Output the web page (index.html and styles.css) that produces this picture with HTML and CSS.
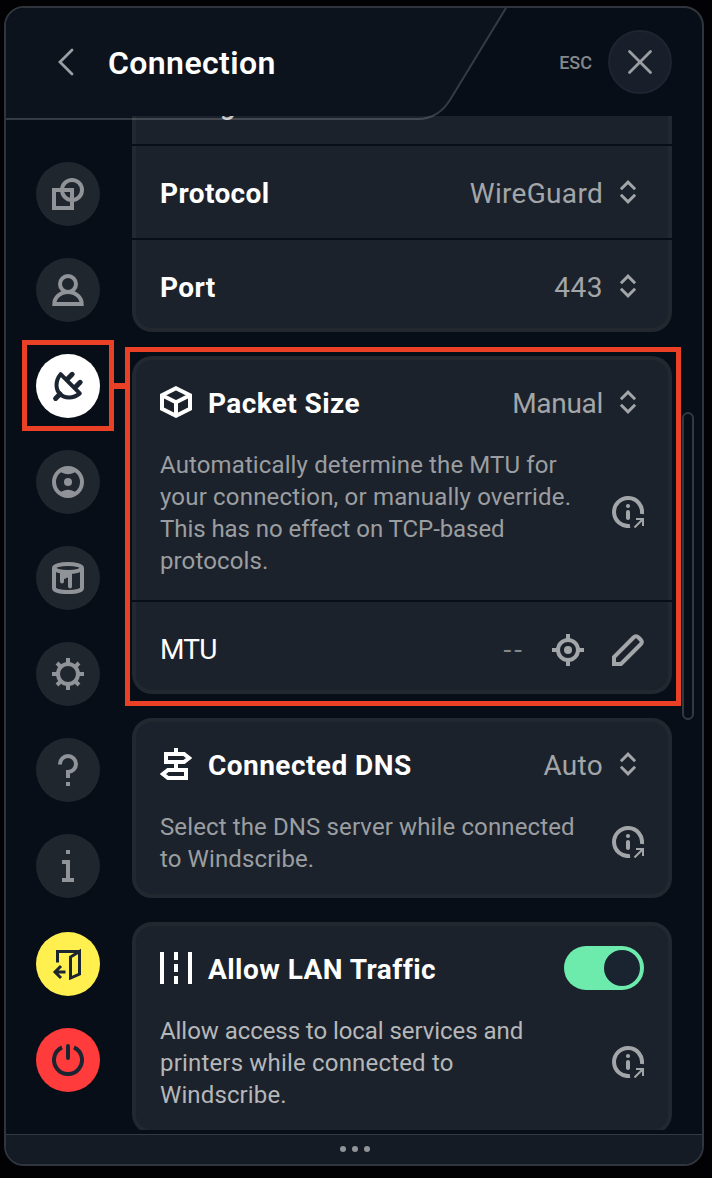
FILE: index.html
```html
<!DOCTYPE html>
<html lang="en">
<head>
    <meta charset="UTF-8">
    <meta name="viewport" content="width=device-width, initial-scale=1.0">
    <title>Connection</title>
    <link rel="stylesheet" href="styles.css">
</head>
<body>
    <!-- shared symbols -->
    <svg class="symbols" width="0" height="0">
        <symbol id="updown" viewBox="0 0 32 32">
            <path d="M8.9 13.2 16 6.1l7.1 7.1M8.9 18.8l7.1 7.1 7.1-7.1" fill="none" stroke="currentColor" stroke-width="2.9"/>
        </symbol>
        <symbol id="info" viewBox="0 0 32 32">
            <path d="M29.9 18A14 14 0 1 0 18 29.9" fill="none" stroke="currentColor" stroke-width="4"/>
            <circle cx="16" cy="10" r="2.1" fill="currentColor"/>
            <path d="M16 16v6" fill="none" stroke="currentColor" stroke-width="4" stroke-linecap="round"/>
            <path d="M22.5 31.5 31 23M24 23h7v7" fill="none" stroke="currentColor" stroke-width="2"/>
        </symbol>
    </svg>

    <div class="window">
        <header class="header">
            <svg class="header-shape" width="504" height="114" viewBox="0 0 504 114">
                <path class="header-fill" d="M0 0H500L444 92Q440 99 432 105L428 108H126V111H0Z"/>
                <path class="header-line" d="M500 0 444 92Q432 111 412 111H0"/>
            </svg>
            <svg class="back" width="32" height="32" viewBox="0 0 32 32"><path d="M22 4 10 16l12 12"/></svg>
            <h1>Connection</h1>
            <span class="esc">ESC</span>
            <button class="close">
                <svg width="32" height="32" viewBox="0 0 32 32"><path d="M5.5 5.5l21 21M26.5 5.5l-21 21"/></svg>
            </button>
        </header>

        <div class="main">
            <nav class="sidebar">
                <a class="tab"><svg viewBox="0 0 32 32"><path d="M2 12h18v18H2z"/><circle cx="20" cy="12" r="10"/></svg></a>
                <a class="tab"><svg viewBox="0 0 32 32"><circle cx="16" cy="10" r="8"/><path d="M2.3 30a13.7 12 0 0 1 27.4 0z"/></svg></a>
                <a class="tab active"><svg viewBox="0 0 32 32"><path d="M8.6 4.2 27.8 23.4C21 29 12.5 28.6 8 24S3 11 8.6 4.2z" stroke-linejoin="round"/><path class="prong" d="M16 8.5l4.2-4.2M24 16.5l4.2-4.2M3.6 28.4 8 24"/></svg></a>
                <a class="tab"><svg viewBox="0 0 32 32"><circle cx="16" cy="16" r="14"/><path class="solid" d="M7 4Q16 .5 25 4L22.5 6.5Q16 10 9.5 6.5zM7 28Q16 31.5 25 28L22.5 25.5Q16 22 9.5 25.5z"/><circle class="solid" cx="16" cy="16" r="4"/></svg></a>
                <a class="tab"><svg viewBox="0 0 32 32"><path d="M2 6v20c0 2.2 6 4 14 4s14-1.8 14-4V6"/><ellipse cx="16" cy="6" rx="14" ry="4"/><path class="solid" d="M8 9h12v15.5a2 2 0 0 1-4 0V16a1.5 1.5 0 0 0-2 0v.5a1.5 1.5 0 0 1-2 0V19.5a2 2 0 0 1-4 0z"/></svg></a>
                <a class="tab"><svg viewBox="0 0 32 32"><circle cx="16" cy="16" r="10"/><path d="M16 0v6M16 26v6M0 16h6M26 16h6M5 5l4.5 4.5M22.5 22.5 27 27M27 5l-4.5 4.5M5 27l4.5-4.5"/></svg></a>
                <a class="tab"><svg viewBox="0 0 32 32"><path d="M8 10.5V10a8 8 0 1 1 8 8v6M16 28v4"/></svg></a>
                <a class="tab"><svg viewBox="0 0 32 32"><path d="M16 0v4M10 12h6v18M10 30h12"/></svg></a>
                <a class="tab exit"><svg viewBox="0 0 32 32"><path d="M5.5 14.5V3.5h22M27.5 3.5V26l-9 4V9z"/><path d="M13.5 24H3M9 18l-6 6 6 6"/></svg></a>
                <a class="tab power"><svg viewBox="0 0 32 32"><path d="M22 3.35A14 14 0 1 1 10 3.35"/><path d="M16 2v12" stroke-linecap="round"/></svg></a>
            </nav>

            <div class="content">
                <div class="card">
                    <div class="row mode"><span class="name">Config</span></div>
                    <div class="row">
                        <span class="name">Protocol</span>
                        <span class="value">WireGuard</span>
                        <svg class="icon"><use href="#updown"/></svg>
                    </div>
                    <div class="row">
                        <span class="name">Port</span>
                        <span class="value port">443</span>
                        <svg class="icon"><use href="#updown"/></svg>
                    </div>
                </div>

                <div class="card">
                    <div class="section">
                        <div class="line">
                            <svg class="title-icon" viewBox="0 0 32 32"><path d="M16 2.2 30 9.2v13.6l-14 7-14-7V9.2zM2 9.2l14 7 14-7M16 16.2V30"/></svg>
                            <span class="name">Packet Size</span>
                            <span class="value manual">Manual</span>
                            <svg class="icon"><use href="#updown"/></svg>
                        </div>
                        <div class="desc">
                            <p>Automatically determine the MTU for<br><span class="wide">your connection, or manually override.</span><br><span class="tight">This has no effect on TCP-based</span><br>protocols.</p>
                            <svg class="icon"><use href="#info"/></svg>
                        </div>
                    </div>
                    <div class="row">
                        <span class="label">MTU</span>
                        <span class="value dashes">--</span>
                        <svg class="icon tool" viewBox="0 0 32 32"><circle cx="16" cy="16" r="10"/><path d="M16 0v6M16 26v6M0 16h6M26 16h6"/><circle class="solid" cx="16" cy="16" r="4"/></svg>
                        <svg class="icon tool" viewBox="0 0 32 32"><path d="M2 30v-7L21.5 3.5q2.5-2.5 5 0l2 2q2.5 2.5 0 5L9 30z"/></svg>
                    </div>
                </div>

                <div class="card">
                    <div class="section">
                        <div class="line">
                            <svg class="title-icon" viewBox="0 0 32 32"><path d="M16 0v5M16 15v6M6 6h18l5 4-5 4H6zM26 22H8l-5 4 5 4h18z"/></svg>
                            <span class="name dns">Connected DNS</span>
                            <span class="value">Auto</span>
                            <svg class="icon"><use href="#updown"/></svg>
                        </div>
                        <div class="desc">
                            <p>Select the DNS server while connected<br>to Windscribe.</p>
                            <svg class="icon"><use href="#info"/></svg>
                        </div>
                    </div>
                </div>

                <div class="card">
                    <div class="section">
                        <div class="line">
                            <svg class="title-icon" viewBox="0 0 32 32"><path d="M2 0v32M30 0v32M16 0v8M16 12v8M16 24v8"/></svg>
                            <span class="name lan">Allow LAN Traffic</span>
                            <span class="toggle"></span>
                        </div>
                        <div class="desc bright">
                            <p><span class="tight">Allow access to local services and</span><br><span class="wide">printers while connected to</span><br>Windscribe.</p>
                            <svg class="icon"><use href="#info"/></svg>
                        </div>
                    </div>
                </div>
            </div>
        </div>

        <footer class="footer"><i></i><i></i><i></i></footer>
    </div>

    <!-- overlays -->
    <div class="scroll-thumb"></div>
    <div class="mark mark-tab"></div>
    <div class="mark-link"></div>
    <div class="mark mark-card"></div>
</body>
</html>
```
FILE: styles.css
```css
* {
    box-sizing: border-box;
}
body {
    margin: 0;
    padding: 6px 8px 12px 4px;
    height: 1178px;
    background-color: #020204;
    font-family: Roboto, "Noto Sans", sans-serif;
    color: #fff;
    position: relative;
    overflow: hidden;
}
.symbols {
    position: absolute;
}
.window {
    height: 1160px;
    border: 2px solid #30353d;
    border-radius: 20px;
    background-color: #070e17;
    overflow: hidden;
    display: flex;
    flex-direction: column;
}
.header {
    position: relative;
    z-index: 1;
    height: 108px;
    flex: none;
    display: flex;
    align-items: center;
    padding: 0 30px 0 44px;
}
.header-shape {
    position: absolute;
    left: 0;
    top: 0;
}
.header-fill {
    fill: #0c131c;
}
.header-line {
    fill: none;
    stroke: rgba(255, 255, 255, 0.18);
    stroke-width: 2;
}
.back,
.close svg {
    position: relative;
    fill: none;
    stroke: #9b9ea2;
    stroke-width: 2.8;
    stroke-linecap: round;
}
h1 {
    position: relative;
    margin: 2px 0 0 26px;
    font-size: 32px;
    font-weight: 600;
    letter-spacing: 0.4px;
    white-space: nowrap;
}
.esc {
    margin-left: auto;
    font-size: 18px;
    font-weight: 500;
    color: #84888c;
}
.close {
    width: 64px;
    height: 64px;
    margin-left: 16px;
    padding: 0;
    border: 2px solid #1f2530;
    border-radius: 50%;
    background-color: #181e2a;
    display: flex;
    align-items: center;
    justify-content: center;
}
.main {
    height: 1014px;
    flex: none;
    display: flex;
    overflow: hidden;
}
.sidebar {
    width: 126px;
    flex: none;
    padding: 46px 0 0 30px;
    display: flex;
    flex-direction: column;
    gap: 32px;
}
.tab {
    width: 64px;
    height: 64px;
    flex: none;
    border-radius: 50%;
    background-color: #20262e;
    color: #909397;
    display: flex;
    align-items: center;
    justify-content: center;
}
.tab svg,
.tool,
.title-icon {
    width: 32px;
    height: 32px;
    flex: none;
    fill: none;
    stroke: currentColor;
    stroke-width: 4;
}
.tab .solid,
.tool .solid {
    fill: currentColor;
    stroke: none;
}
.prong {
    stroke-width: 5;
    stroke-linecap: round;
}
.tab.active {
    background-color: #fff;
    color: #1b2532;
}
.tab.exit {
    margin-top: 2px;
    background-color: #ffef4f;
    color: #1b2532;
}
.tab.exit svg {
    stroke-width: 3;
}
.tab.power {
    background-color: #ff3b3b;
    color: #1b2532;
}
.content {
    width: 540px;
    flex: none;
    margin-top: -64px;
    display: flex;
    flex-direction: column;
    gap: 24px;
}
.card {
    flex: none;
    display: flex;
    flex-direction: column;
    gap: 2px;
}
.row,
.section {
    background-color: #1c222b;
    border: 0 solid #23272f;
    border-width: 0 4px;
    padding: 0 24px;
}
.card > :first-child {
    border-top-width: 4px;
    border-radius: 20px 20px 0 0;
}
.card > :last-child {
    border-bottom-width: 4px;
    border-radius: 0 0 20px 20px;
}
.card > :only-child {
    border-radius: 20px;
}
.row {
    height: 92px;
    display: flex;
    align-items: center;
}
.row:last-child {
    padding-top: 4px;
}
.mode .name {
    padding-top: 8px;
    font-weight: 500;
    letter-spacing: -1.4px;
    color: #c4c6c8;
}
.section {
    padding-bottom: 24px;
}
.section:last-child {
    padding-bottom: 20px;
}
.line {
    height: 88px;
    padding-bottom: 4px;
    display: flex;
    align-items: center;
}
.title-icon {
    margin-right: 16px;
}
.name,
.label {
    padding-top: 2px;
    font-size: 28px;
    font-weight: 700;
    letter-spacing: 0.4px;
    white-space: nowrap;
}
.name.dns,
.name.lan {
    letter-spacing: 0.45px;
}
.label {
    font-weight: 400;
    letter-spacing: -0.8px;
}
.value {
    margin-left: auto;
    padding-top: 2px;
    font-size: 28px;
    letter-spacing: 0.3px;
    color: #a3a6a9;
    white-space: nowrap;
}
.value.port {
    letter-spacing: 0.5px;
}
.value.manual {
    letter-spacing: -0.3px;
}
.value.dashes {
    letter-spacing: 3px;
    margin-right: -1px;
    color: #84888c;
}
.icon {
    width: 32px;
    height: 32px;
    flex: none;
    margin-left: 9px;
    color: #a3a6a9;
}
.tool {
    margin-left: 28px;
    margin-top: 4px;
}
.desc {
    display: flex;
    align-items: center;
    justify-content: space-between;
    color: #9b9ea1;
}
.desc p {
    margin: 0 0 -1px;
    padding-top: 1px;
    font-size: 24px;
    line-height: 32px;
    letter-spacing: 0.12px;
    white-space: nowrap;
}
.desc .wide {
    letter-spacing: 0.18px;
}
.desc .tight {
    letter-spacing: -0.06px;
}
.bright {
    color: #b5b7ba;
}
.toggle {
    width: 80px;
    height: 44px;
    margin-left: auto;
    padding: 4px;
    border-radius: 22px;
    background-color: #6cebad;
    display: flex;
    justify-content: flex-end;
}
.toggle::after {
    content: '';
    width: 36px;
    height: 36px;
    border-radius: 50%;
    background-color: #1a2431;
}
.footer {
    flex: 1;
    margin-top: 4px;
    border-top: 1px solid #333941;
    background-color: #151b24;
    display: flex;
    align-items: center;
    justify-content: center;
    gap: 6px;
    padding: 0 0 2px 2px;
}
.footer i {
    width: 6px;
    height: 6px;
    border-radius: 50%;
    background-color: #909397;
}
.scroll-thumb {
    position: absolute;
    left: 682px;
    top: 412px;
    width: 12px;
    height: 308px;
    border: 2px solid #343941;
    border-radius: 6px;
}
.mark {
    position: absolute;
    border: 5px solid #ea4025;
}
.mark-tab {
    left: 22px;
    top: 340px;
    width: 92px;
    height: 91px;
}
.mark-link {
    position: absolute;
    left: 113px;
    top: 383px;
    width: 17px;
    height: 6px;
    background-color: #ea4025;
}
.mark-card {
    left: 125px;
    top: 347px;
    width: 556px;
    height: 359px;
}
```
